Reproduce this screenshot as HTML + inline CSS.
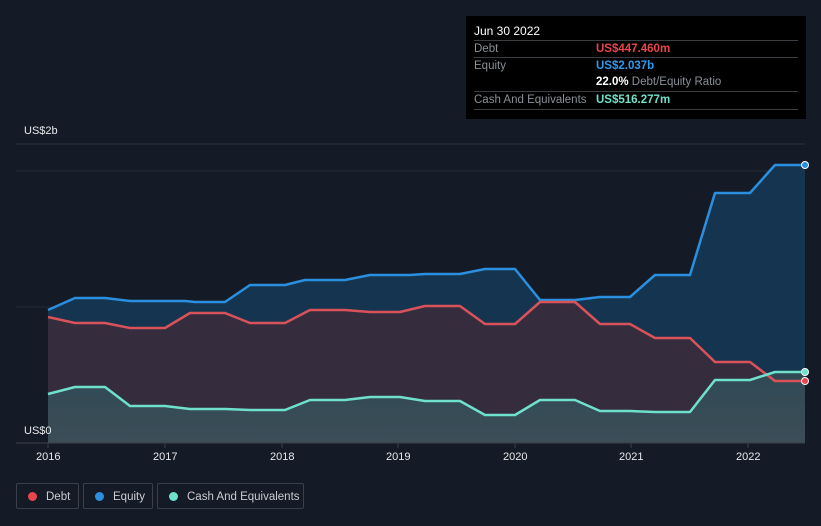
<!DOCTYPE html><html><head><style>
body{margin:0;background:#151b26;font-family:"Liberation Sans",sans-serif;}
.w{position:relative;width:821px;height:526px;overflow:hidden;background:#151b26}
.tt{position:absolute;left:466px;top:16px;width:340px;height:103px;background:#000;font-size:11.5px;color:#8a8f97}
.r{position:absolute;left:8px;width:324px;border-top:1px solid #3a3d42;height:17px;line-height:17px}
.leg{position:absolute;top:483px;height:26px;border:1px solid #3a404a;border-radius:2px;color:#c9ccd1;font-size:11.5px;line-height:26px;box-sizing:border-box;white-space:nowrap}
.leg i{display:inline-block;width:9px;height:9px;border-radius:50%;margin:0 9px 0 11px;vertical-align:-1px}
.ax{position:absolute;color:#e6e8eb;font-size:11px}
</style></head><body><div class="w">
<svg width="821" height="526" style="position:absolute;left:0;top:0">
<defs><linearGradient id="g" x1="0" y1="0" x2="0" y2="1"><stop offset="0" stop-color="#2f4a55"/><stop offset="1" stop-color="#3c4d57"/></linearGradient></defs>
<line x1="16" y1="144" x2="805" y2="144" stroke="#2d333d"/>
<line x1="16" y1="171" x2="805" y2="171" stroke="#252b35"/>
<line x1="16" y1="307" x2="805" y2="307" stroke="#252b35"/>
<path d="M48,310 L75,298 105,298 130,301 185,301 195,302 225,302 250,285 285,285 305,280 345,280 370,275 410,275 425,274 460,274 485,269 515,269 540,300 575,300 600,297 630,297 655,275 690,275 715,193 750,193 775,165 805,165 L805,443 L48,443Z" fill="#15344f"/>
<path d="M48,317 L75,323 105,323 130,328 165,328 190,313 225,313 250,323 285,323 310,310 345,310 370,312 400,312 425,306 460,306 485,324 515,324 540,302 575,302 600,324 630,324 655,338 690,338 715,362 750,362 775,381 805,381 L805,443 L48,443Z" fill="#352c3e"/>
<path d="M48,394 L75,387 105,387 130,406 165,406 190,409 225,409 250,410 285,410 310,400 345,400 370,397 400,397 425,401 460,401 485,415 515,415 540,400 575,400 600,411 630,411 655,412 690,412 715,380 750,380 775,372 805,372 L805,443 L48,443Z" fill="url(#g)"/>
<g fill="none" stroke-width="2.5" stroke-linejoin="round">
<path d="M48,310 L75,298 105,298 130,301 185,301 195,302 225,302 250,285 285,285 305,280 345,280 370,275 410,275 425,274 460,274 485,269 515,269 540,300 575,300 600,297 630,297 655,275 690,275 715,193 750,193 775,165 805,165" stroke="#2b8fe0"/>
<path d="M48,317 L75,323 105,323 130,328 165,328 190,313 225,313 250,323 285,323 310,310 345,310 370,312 400,312 425,306 460,306 485,324 515,324 540,302 575,302 600,324 630,324 655,338 690,338 715,362 750,362 775,381 805,381" stroke="#d9525a"/>
<path d="M48,394 L75,387 105,387 130,406 165,406 190,409 225,409 250,410 285,410 310,400 345,400 370,397 400,397 425,401 460,401 485,415 515,415 540,400 575,400 600,411 630,411 655,412 690,412 715,380 750,380 775,372 805,372" stroke="#6fe0cc"/>
</g>
<circle cx="805" cy="165" r="3.5" fill="#2b8fe0" stroke="#fff"/>
<circle cx="805" cy="381" r="3.5" fill="#e8454d" stroke="#fff"/>
<circle cx="805" cy="372" r="3.5" fill="#6fe0cc" stroke="#fff"/>
<line x1="16" y1="443" x2="805" y2="443" stroke="#3a3f48"/>
<g stroke="#3a3f48"><line x1="48" y1="443" x2="48" y2="448"/><line x1="165" y1="443" x2="165" y2="448"/><line x1="282" y1="443" x2="282" y2="448"/><line x1="398" y1="443" x2="398" y2="448"/><line x1="515" y1="443" x2="515" y2="448"/><line x1="631" y1="443" x2="631" y2="448"/><line x1="748" y1="443" x2="748" y2="448"/></g>
</svg>
<div class="ax" style="left:24px;top:125px">US$2b</div>
<div class="ax" style="left:24px;top:425px">US$0</div>
<div class="ax" style="left:36px;top:451px">2016</div>
<div class="ax" style="left:153px;top:451px">2017</div>
<div class="ax" style="left:270px;top:451px">2018</div>
<div class="ax" style="left:386px;top:451px">2019</div>
<div class="ax" style="left:503px;top:451px">2020</div>
<div class="ax" style="left:619px;top:451px">2021</div>
<div class="ax" style="left:736px;top:451px">2022</div>
<div class="tt">
<div style="position:absolute;left:8px;top:8px;color:#fff;font-size:12px">Jun 30 2022</div>
<div class="r" style="top:24px">Debt<span style="position:absolute;left:122px;color:#e8454d;font-weight:bold">US$447.460m</span></div>
<div class="r" style="top:41px">Equity<span style="position:absolute;left:122px;color:#2b9bf0;font-weight:bold">US$2.037b</span></div>
<div class="r" style="top:58px;border:0"><span style="position:absolute;left:122px"><b style="color:#fff">22.0%</b> Debt/Equity Ratio</span></div>
<div class="r" style="top:75px">Cash And Equivalents<span style="position:absolute;left:122px;color:#6fe0cc;font-weight:bold">US$516.277m</span></div>
<div class="r" style="top:93px;height:0"></div>
</div>
<div class="leg" style="left:16px;width:63px"><i style="background:#e8454d"></i>Debt</div>
<div class="leg" style="left:83px;width:70px"><i style="background:#2b8fe0"></i>Equity</div>
<div class="leg" style="left:157px;width:147px"><i style="background:#6fe0cc"></i>Cash And Equivalents</div>
</div></body></html>
